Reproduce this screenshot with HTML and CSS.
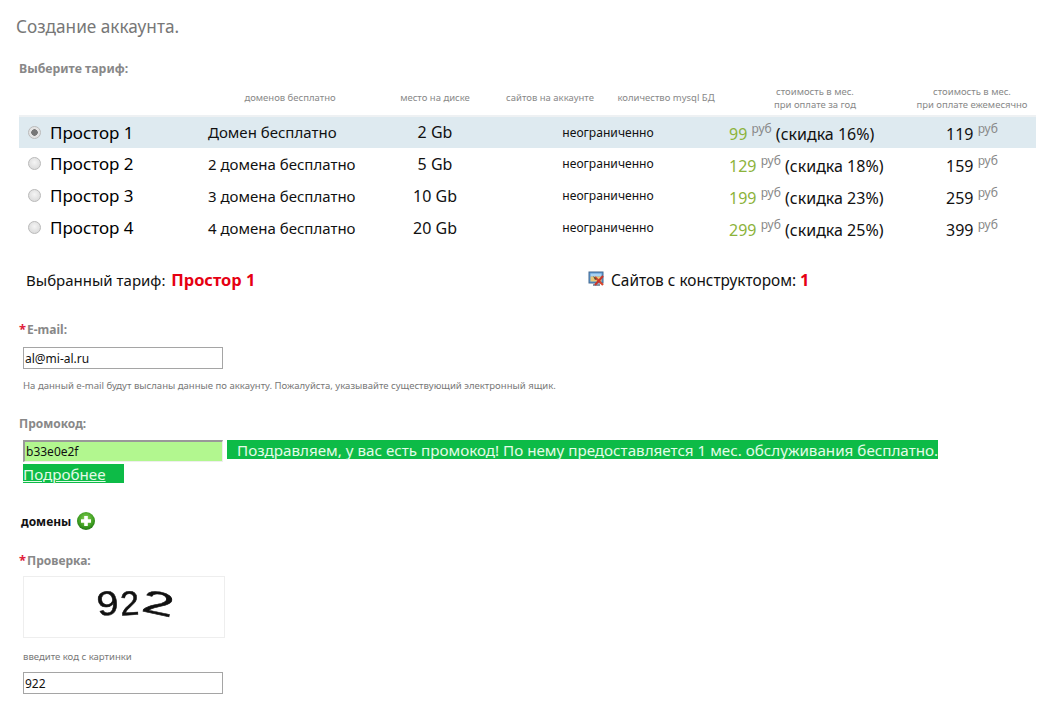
FILE: index.html
```html
<!DOCTYPE html>
<html lang="ru">
<head>
<meta charset="utf-8">
<title>Создание аккаунта</title>
<link rel="stylesheet" href="styles.css">
</head>
<body>
<main class="page">
  <h1 class="title">Создание аккаунта.</h1>
  <div class="label tariff-label">Выберите тариф:</div>
  <table class="plans">
    <colgroup>
      <col class="c-name"><col class="c-free"><col class="c-disk"><col class="c-sites"><col class="c-sql"><col class="c-year"><col class="c-month">
    </colgroup>
    <thead>
      <tr>
        <th></th>
        <th>доменов бесплатно</th>
        <th>место на диске</th>
        <th>сайтов на аккаунте</th>
        <th>количество mysql БД</th>
        <th>стоимость в мес.<br>при оплате за год</th>
        <th>стоимость в мес.<br>при оплате ежемесячно</th>
      </tr>
    </thead>
    <tbody>
      <tr class="active">
        <td class="name"><label class="plan"><input type="radio" name="plan" class="radio" checked>Простор 1</label></td>
        <td class="free">Домен бесплатно</td>
        <td class="disk">2 Gb</td>
        <td class="unlim" colspan="2">неограниченно</td>
        <td class="year"><span class="green">99</span> <sup class="cur">руб</sup> (скидка 16%)</td>
        <td class="month">119 <sup class="cur">руб</sup></td>
      </tr>
      <tr>
        <td class="name"><label class="plan"><input type="radio" name="plan" class="radio">Простор 2</label></td>
        <td class="free">2 домена бесплатно</td>
        <td class="disk">5 Gb</td>
        <td class="unlim" colspan="2">неограниченно</td>
        <td class="year"><span class="green">129</span> <sup class="cur">руб</sup> (скидка 18%)</td>
        <td class="month">159 <sup class="cur">руб</sup></td>
      </tr>
      <tr>
        <td class="name"><label class="plan"><input type="radio" name="plan" class="radio">Простор 3</label></td>
        <td class="free">3 домена бесплатно</td>
        <td class="disk">10 Gb</td>
        <td class="unlim" colspan="2">неограниченно</td>
        <td class="year"><span class="green">199</span> <sup class="cur">руб</sup> (скидка 23%)</td>
        <td class="month">259 <sup class="cur">руб</sup></td>
      </tr>
      <tr>
        <td class="name"><label class="plan"><input type="radio" name="plan" class="radio">Простор 4</label></td>
        <td class="free">4 домена бесплатно</td>
        <td class="disk">20 Gb</td>
        <td class="unlim" colspan="2">неограниченно</td>
        <td class="year"><span class="green">299</span> <sup class="cur">руб</sup> (скидка 25%)</td>
        <td class="month">399 <sup class="cur">руб</sup></td>
      </tr>
    </tbody>
  </table>

  <div class="summary">
    <div class="summary-plan">Выбранный тариф: <strong class="red">Простор 1</strong></div>
    <div class="summary-sites">
      <svg class="builder-icon" width="18" height="18" viewBox="0 0 18 18" aria-hidden="true">
        <rect x="1" y="2" width="14" height="11" fill="#5b9bd5" stroke="#45688f"/>
        <rect x="2.5" y="3.5" width="11" height="3" fill="#a9d2f2"/>
        <rect x="2.5" y="6.5" width="11" height="5" fill="#e9c877"/>
        <path d="M5 15h7" stroke="#8795a5" stroke-width="2"/>
        <path d="M7 7l8 8" stroke="#d9452b" stroke-width="2.2"/>
        <path d="M15 6l-8 9" stroke="#c9352a" stroke-width="2"/>
        <path d="M5 6l4 3-2 1z" fill="#5a4a32"/>
      </svg>
      <span>Сайтов с конструктором: <strong class="red">1</strong></span>
    </div>
  </div>

  <div class="label email-label"><span class="star">*</span>E-mail:</div>
  <input class="field" type="text" value="al@mi-al.ru">
  <p class="hint email-hint">На данный e-mail будут высланы данные по аккаунту. Пожалуйста, указывайте существующий электронный ящик.</p>

  <div class="label promo-label">Промокод:</div>
  <div class="promo">
    <input class="field field-ok" type="text" value="b33e0e2f">
    <span class="promo-msg">Поздравляем, у вас есть промокод! По нему предоставляется 1 мес. обслуживания бесплатно.</span>
    <a href="#" class="promo-link">Подробнее</a>
  </div>

  <div class="domains">домены
    <svg class="plus" width="20" height="20" viewBox="0 0 20 20" aria-hidden="true">
      <defs>
        <radialGradient id="plusFill" cx="50%" cy="38%" r="65%">
          <stop offset="0" stop-color="#8fd45a"/>
          <stop offset=".65" stop-color="#3f9f22"/>
          <stop offset="1" stop-color="#1d6e12"/>
        </radialGradient>
      </defs>
      <circle cx="10" cy="10" r="9" fill="url(#plusFill)"/>
      <path d="M10 5v10M5 10h10" stroke="#fff" stroke-width="3.6"/>
    </svg>
  </div>

  <div class="label check-label"><span class="star">*</span>Проверка:</div>
  <div class="captcha" role="img" aria-label="922">
    <span class="cap cap-a">9</span><span class="cap cap-b">2</span><span class="cap cap-c">2</span>
  </div>
  <p class="hint captcha-hint">введите код с картинки</p>
  <input class="field" type="text" value="922">
</main>
</body>
</html>
```
FILE: styles.css
```css
* { box-sizing: border-box; }
html, body { margin: 0; padding: 0; background: #fff; }
body { font-family: "Noto Sans", "Open Sans", sans-serif; color: #111; overflow: hidden; }
.page { height: 709px; overflow: hidden; }

.title { margin: 0; padding: 15px 0 0 16px; height: 61px; font-size: 17.2px; line-height: 24px; font-weight: 400; color: #777; }
.label { font-size: 12px; font-weight: 700; color: #888; line-height: 16px; margin-left: 19px; }
.tariff-label { height: 21px; font-size: 12.3px; }
.star { color: #e0203c; font-size: 13px; margin-right: 1px; }

.plans { border-collapse: collapse; table-layout: fixed; width: 1017px; margin-left: 19px; }
.c-name { width: 181px; } .c-free { width: 180px; } .c-disk { width: 110px; } .c-sites { width: 120px; }
.c-sql { width: 112px; } .c-year { width: 186px; } .c-month { width: 128px; }
.plans th { height: 34px; padding: 0 0 2px; font-size: 9.5px; line-height: 13px; font-weight: 400; color: #888; text-align: center; vertical-align: middle; border-bottom: 2px solid #eef1f3; white-space: nowrap; }
.plans td { height: 32px; padding: 0 0 1px; font-size: 16px; white-space: nowrap; }
.active td { background: #deeaf0; }
.plan { display: flex; align-items: center; gap: 9px; padding-left: 9px; font-size: 17px; color: #000; }
.radio { appearance: none; width: 13px; height: 13px; margin: 0; border-radius: 50%; border: 1px solid #bbb; background: radial-gradient(circle at 50% 40%, #f4f4f4, #d4d4d4); flex: none; }
.radio:checked { background: radial-gradient(circle, #777 0 3px, #e4e4e4 3.5px); }
.plans .free { padding-left: 8px; font-size: 15px; }
.disk { text-align: center; }
.plans .unlim { padding-left: 4px; text-align: center; font-size: 12.1px; color: #111; }
.plans .year { padding: 3px 0 0 7px; }
.plans .month { padding: 3px 0 0 38px; }
.green { color: #8cb33a; }
.cur { font-size: 12px; color: #888; vertical-align: 7px; line-height: 0; }

.summary { display: flex; align-items: center; height: 20px; margin-top: 25px; font-size: 15px; }
.summary-plan { width: 588px; padding-left: 26px; }
.summary-plan .red { margin-left: 2px; }
.summary-sites { display: flex; align-items: center; font-size: 15.4px; }
.builder-icon { margin-right: 5px; }
.red { color: #e60012; font-weight: 700; font-size: 16.4px; }

.email-label { margin-top: 32px; height: 26px; }
.field { display: block; width: 200px; height: 22px; margin: 0 0 0 23px; padding: 0 1px; border: 1px solid #a5a5a5; background: #fff; font-family: inherit; font-size: 12px; color: #111; outline: none; border-radius: 0; }
.hint { margin: 0; font-size: 9.55px; line-height: 12px; color: #777; margin-left: 23px; }
.email-hint { margin-top: 11px; }
.promo-label { margin-top: 24px; height: 24px; }
.promo { display: flex; flex-wrap: wrap; align-items: flex-start; column-gap: 4px; row-gap: 2px; width: 1000px; margin-left: 23px; height: 43px; font-size: 15.2px; }
.field-ok { margin: 0; background: #b2f78f; border-style: solid; border-width: 2px 1px 1px 2px; border-color: #999 #eee #eee #999; }
.promo-msg { height: 19px; line-height: 21px; background: #0dbb47; color: #e4fbe8; padding: 0 0 0 10px; white-space: nowrap; }
.promo-link { flex: none; width: 101px; height: 19px; line-height: 21px; background: #0dbb47; color: #e4fbe8; text-decoration: underline; }
.domains { display: flex; align-items: center; gap: 5px; margin: 28px 0 0 21px; height: 20px; font-size: 12px; font-weight: 700; color: #111; }
.check-label { margin-top: 21px; height: 24px; }
.captcha { display: flex; align-items: center; width: 202px; height: 62px; margin-left: 23px; padding: 0 0 8px 74px; border: 1px solid #eee; font-family: "Liberation Sans", sans-serif; color: #111; font-size: 34px; line-height: 1; -webkit-text-stroke: .5px #111; filter: blur(.4px); }
.cap { display: inline-block; }
.cap-a { transform: rotate(-6deg) scaleX(1.15); margin-right: 3px; }
.cap-b { transform: rotate(-3deg); }
.cap-c { transform: rotate(12deg) scale(1.7, .95); margin-left: 10px; }
.captcha-hint { margin-top: 13px; height: 21px; }
```
